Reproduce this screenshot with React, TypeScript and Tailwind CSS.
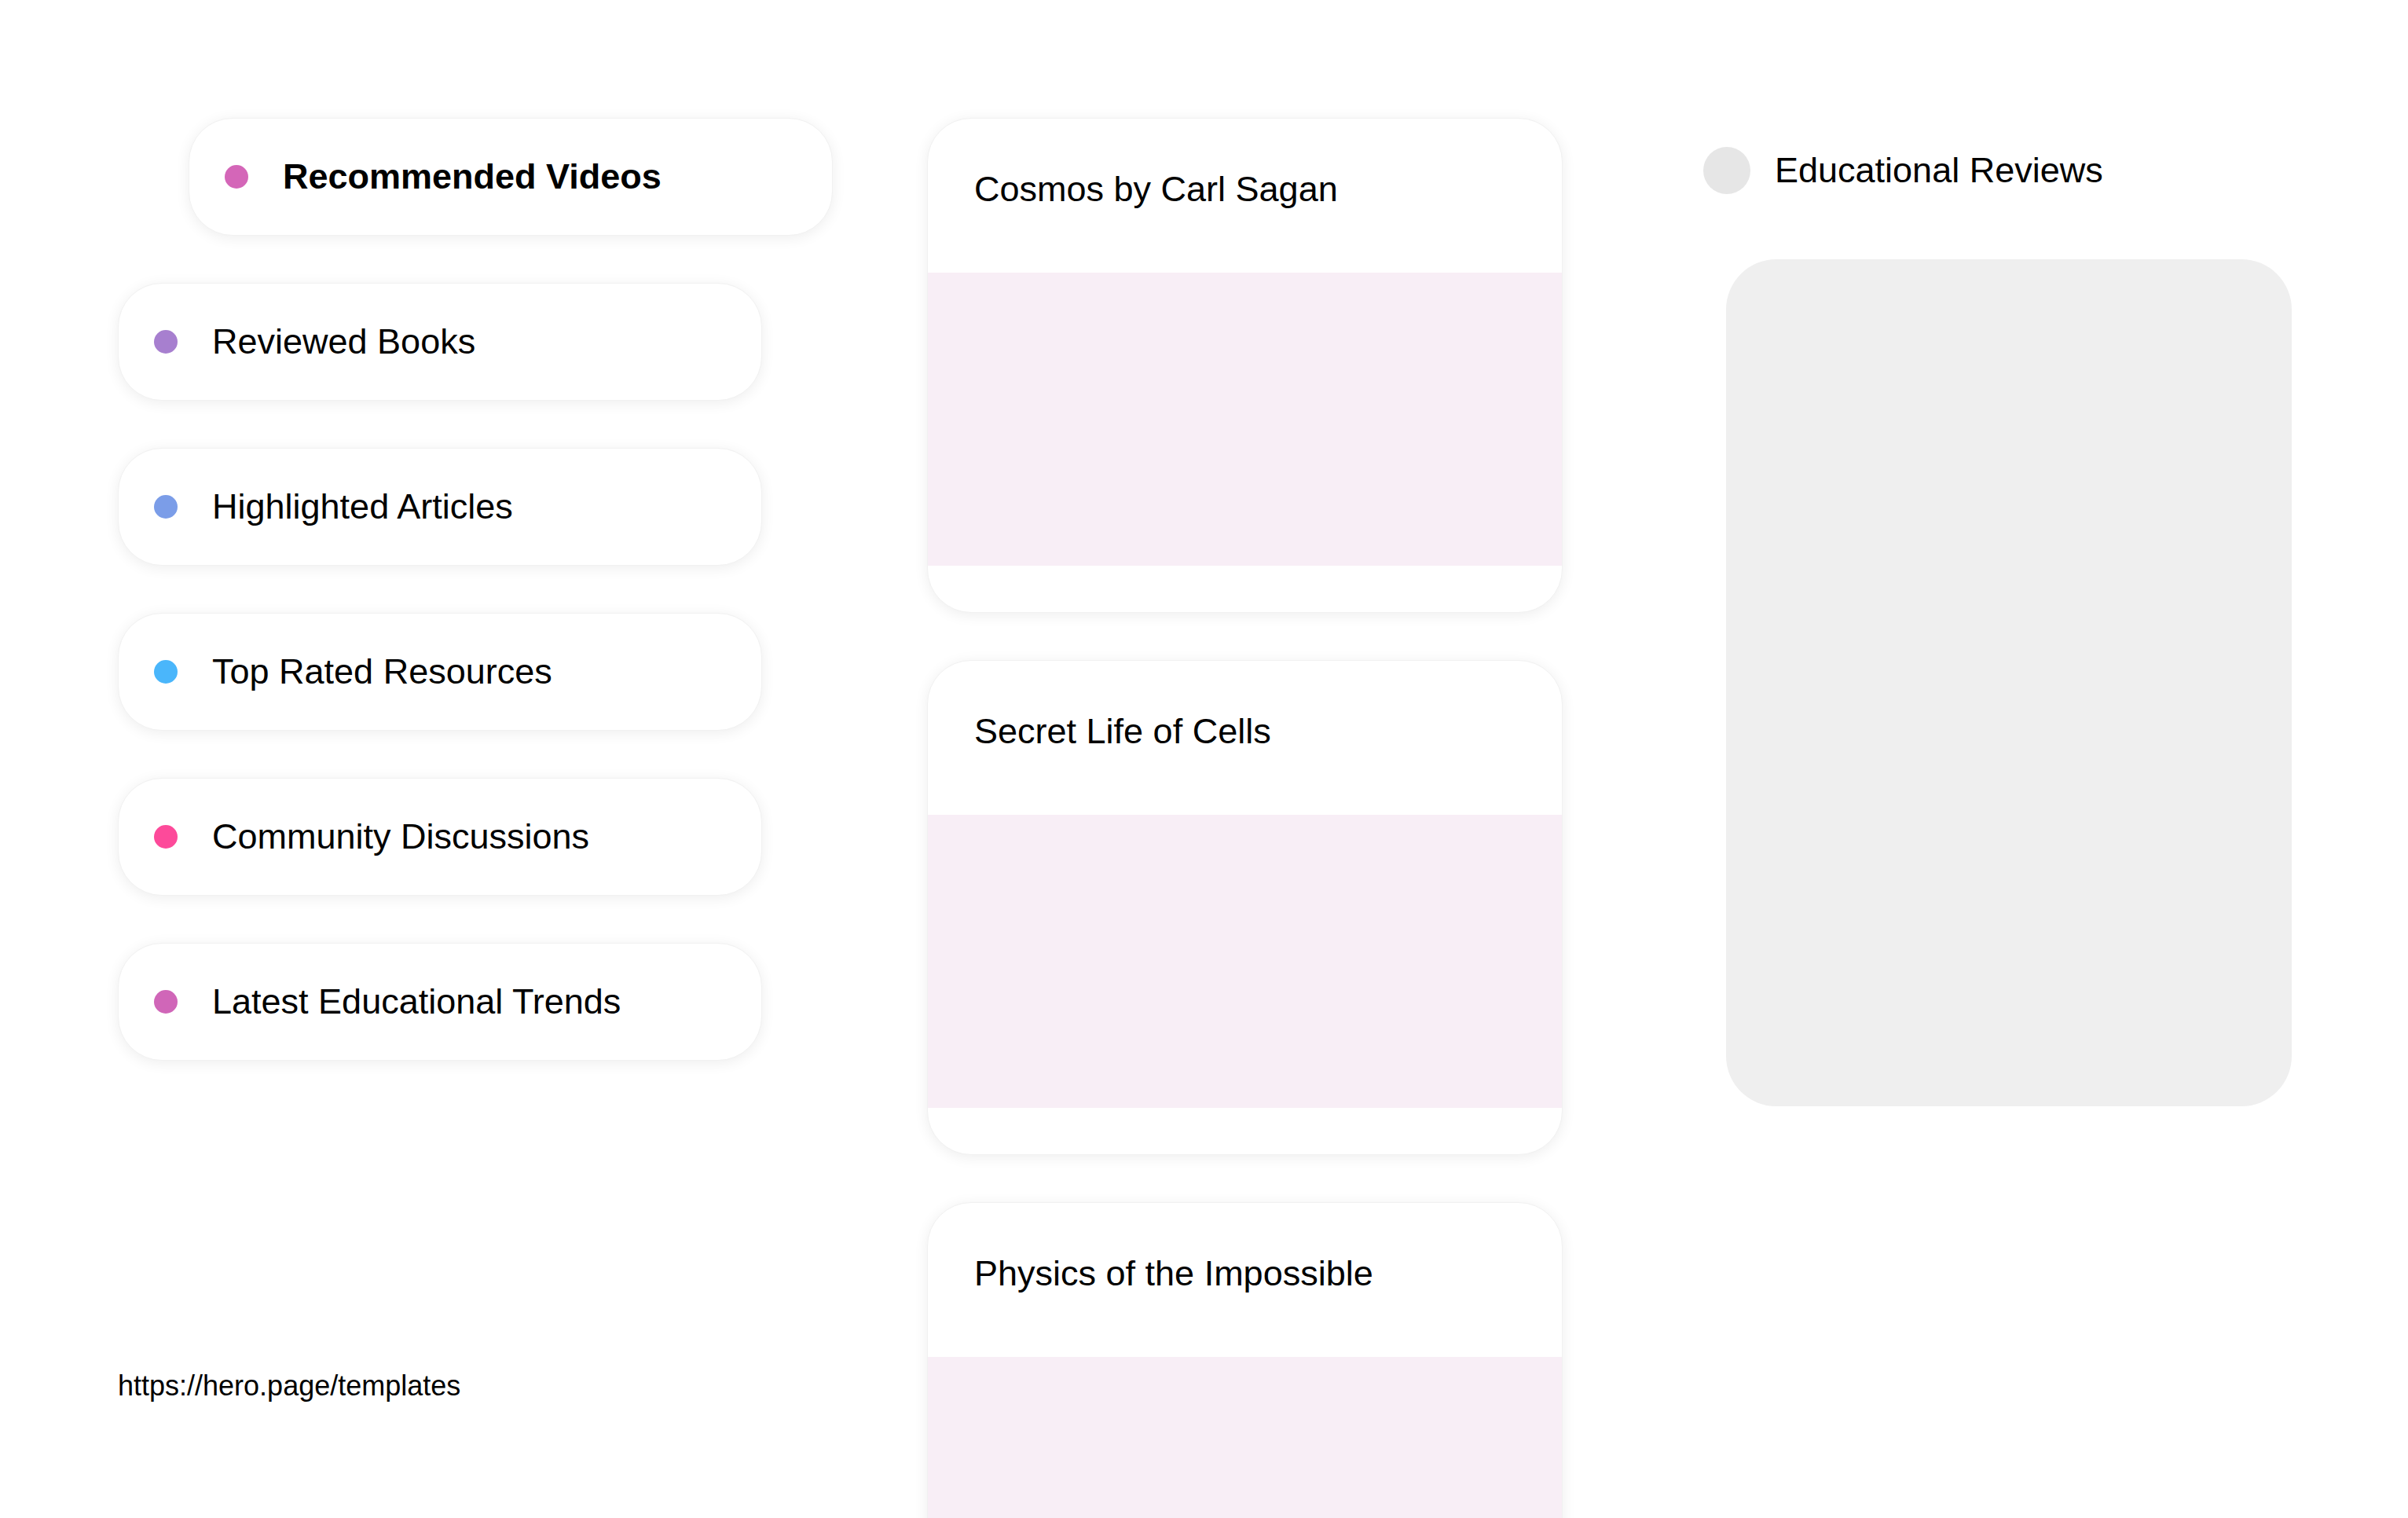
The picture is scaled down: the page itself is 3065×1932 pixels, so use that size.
import React from 'react';

const navItems = [
  { label: 'Recommended Videos', dot: 'bg-[#d466b8]', active: true },
  { label: 'Reviewed Books', dot: 'bg-[#a77fcf]', active: false },
  { label: 'Highlighted Articles', dot: 'bg-[#7b9de8]', active: false },
  { label: 'Top Rated Resources', dot: 'bg-[#4ab6fb]', active: false },
  { label: 'Community Discussions', dot: 'bg-[#fd4a9a]', active: false },
  { label: 'Latest Educational Trends', dot: 'bg-[#d066b8]', active: false },
];

const cards = ['Cosmos by Carl Sagan', 'Secret Life of Cells', 'Physics of the Impossible'];

const NavPill: React.FC<{ label: string; dot: string; active: boolean }> = ({ label, dot, active }) => (
  <div
    className={`flex h-[150px] w-[820px] shrink-0 items-center gap-[44px] rounded-[56px] border border-[#f1f1f1] bg-white pl-[45px] shadow-[0_3px_18px_rgba(0,0,0,0.07)] ${
      active ? 'ml-[90px]' : ''
    }`}
  >
    <span className={`h-[30px] w-[30px] shrink-0 rounded-full ${dot}`} />
    <span className={`text-[45px] leading-[66px] ${active ? 'font-bold' : 'font-normal'}`}>{label}</span>
  </div>
);

const BookCard: React.FC<{ title: string }> = ({ title }) => (
  <div className="flex h-[630px] w-[809px] shrink-0 flex-col overflow-hidden rounded-[56px] border border-[#f1f1f1] bg-white shadow-[0_3px_18px_rgba(0,0,0,0.07)]">
    <div className="h-[196px] shrink-0 px-[59px] pt-[57px] text-[45px] leading-[66px]">{title}</div>
    <div className="h-[373px] shrink-0 bg-[#f8eef6]" />
  </div>
);

export default function App() {
  return (
    <div className="flex h-[1932px] w-[3065px] overflow-hidden bg-white pl-[150px] pt-[150px] font-['Liberation_Sans',Arial,sans-serif] text-black">
      {/* left nav */}
      <div className="flex w-[910px] shrink-0 flex-col">
        <div className="flex flex-col gap-[60px]">
          {navItems.map((item) => (
            <NavPill key={item.label} {...item} />
          ))}
        </div>
        <div className="mt-[392px] text-[36px] leading-[43px]">https://hero.page/templates</div>
      </div>

      {/* cards */}
      <div className="ml-[120px] flex shrink-0 flex-col gap-[60px]">
        {cards.map((c) => (
          <BookCard key={c} title={c} />
        ))}
      </div>

      {/* reviews */}
      <div className="ml-[179px] flex shrink-0 flex-col">
        <div className="mt-[37px] flex h-[60px] items-center gap-[31px]">
          <span className="h-[60px] w-[60px] shrink-0 rounded-full bg-[#e6e6e6]" />
          <span className="text-[45px] leading-[66px]">Educational Reviews</span>
        </div>
        <div className="ml-[29px] mt-[83px] h-[1078px] w-[720px] rounded-[64px] bg-[#efefef]" />
      </div>
    </div>
  );
}
